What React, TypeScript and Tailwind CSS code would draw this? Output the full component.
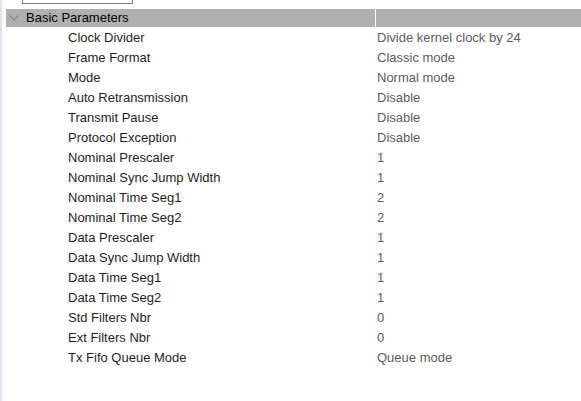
const ROWS: [string, string][] = [
  ["Clock Divider", "Divide kernel clock by 24"],
  ["Frame Format", "Classic mode"],
  ["Mode", "Normal mode"],
  ["Auto Retransmission", "Disable"],
  ["Transmit Pause", "Disable"],
  ["Protocol Exception", "Disable"],
  ["Nominal Prescaler", "1"],
  ["Nominal Sync Jump Width", "1"],
  ["Nominal Time Seg1", "2"],
  ["Nominal Time Seg2", "2"],
  ["Data Prescaler", "1"],
  ["Data Sync Jump Width", "1"],
  ["Data Time Seg1", "1"],
  ["Data Time Seg2", "1"],
  ["Std Filters Nbr", "0"],
  ["Ext Filters Nbr", "0"],
  ["Tx Fifo Queue Mode", "Queue mode"],
];

export default function App() {
  return (
    <div className="h-[401px] w-[581px] overflow-hidden bg-white border-l-2 border-[#dce3eb] font-['Liberation_Sans',Arial,sans-serif] text-[13px]">
      {/* bottom edge of the search box above */}
      <div className="h-[9px] pl-[20px]">
        <div className="h-[4px] w-[111px] border border-t-0 border-[#7a7a7a]" />
      </div>

      <div className="ml-[4px] flex h-[18px] bg-[#b0b0b0] leading-[18px]">
        <div className="flex w-[369px] items-center">
          <svg width="10" height="6" viewBox="0 0 10 6" className="ml-[3px] mr-[7px]">
            <path d="M0.5 0.5 L5 5 L9.5 0.5" fill="none" stroke="#858585" strokeWidth="1.2" />
          </svg>
          <span className="text-black">Basic Parameters</span>
        </div>
        <div className="w-px bg-white" />
        <div className="flex-1" />
      </div>

      <div className="mt-[1px]">
        {ROWS.map(([label, value]) => (
          <div key={label} className="flex h-[20px] leading-[20px]">
            <div className="w-[375px] pl-[66px] text-[#1e1e1e]">{label}</div>
            <div className="flex-1 text-[#5c5c5c]">{value}</div>
          </div>
        ))}
      </div>
    </div>
  );
}
